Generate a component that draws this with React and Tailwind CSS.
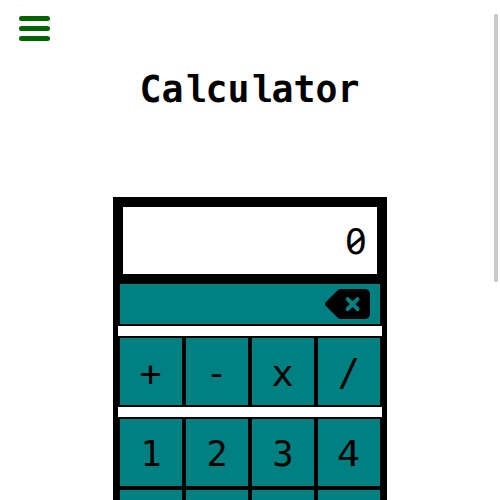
function Key({ children, glyph = "translate-y-[2px]" }) {
  return (
    <button className="flex h-[71px] w-[66px] items-center justify-center border-2 border-black bg-[#008080] text-[35px] leading-none text-black">
      <span className={glyph}>{children}</span>
    </button>
  );
}

const slab = "font-['Liberation_Mono',monospace] text-[38px] tracking-[-0.8px]";

export default function App() {
  return (
    <div className="flex h-[500px] overflow-hidden bg-white font-['DejaVu_Sans_Mono',monospace] text-black">
      <main className="ml-[6px] flex flex-1 flex-col items-center">
        <button aria-label="Menu" className="mt-4 ml-[13px] flex h-[25px] shrink-0 flex-col justify-between self-start">
          <span className="h-[5px] w-[31px] rounded-full bg-[#006400]" />
          <span className="h-[5px] w-[31px] rounded-full bg-[#006400]" />
          <span className="h-[5px] w-[31px] rounded-full bg-[#006400]" />
        </button>
        <h1 className="mt-[27px] -ml-px h-11 shrink-0 text-[36.5px] leading-[44px] font-bold">
          Ca<span className={slab}>l</span>cu<span className={slab}>l</span>ator
        </h1>
        <section className="mt-[85px] w-[274px] shrink-0 border-5 border-black bg-white">
          <div className="flex h-20 items-center justify-end border-5 border-b-8 border-black pr-[10px] font-['DejaVu_Sans',sans-serif] text-[35px] leading-none">
            <span className="relative translate-y-[2px]">
              0
              <span className="absolute top-[16px] left-[3px] h-[3px] w-[16px] -rotate-40 bg-black" />
            </span>
          </div>
          <div className="flex h-11 items-center justify-end border-2 border-black bg-[#008080] pr-[10px]">
            <svg width="45" height="30" viewBox="0 0 576 384" preserveAspectRatio="none" aria-label="Backspace">
              <path d="M576 64v256c0 35-29 64-64 64H205c-17 0-33-7-45-19L9 215c-12-12-12-33 0-46L160 19C172 7 188 0 205 0h307c35 0 64 29 64 64Z" />
              <path d="m290 130 126 126m0-126L290 256" fill="none" stroke="#008080" strokeWidth="52" strokeLinecap="round" />
            </svg>
          </div>
          <div className="h-[10px]" />
          <div className="grid grid-cols-4">
            <Key glyph="translate-y-[3px] scale-x-105">+</Key>
            <Key glyph="translate-y-[2px] scale-x-105">-</Key>
            <Key glyph="translate-y-[3px] scale-x-105">x</Key>
            <Key glyph="translate-y-[1px] text-[37px]">/</Key>
          </div>
          <div className="h-[10px]" />
          <div className="grid grid-cols-4">
            <Key>1</Key>
            <Key>2</Key>
            <Key>3</Key>
            <Key glyph="translate-y-[2px] scale-x-110">4</Key>
          </div>
          <div className="grid grid-cols-4">
            <Key />
            <Key />
            <Key />
            <Key />
          </div>
        </section>
      </main>
      <div className="mt-[14px] mr-[2px] h-[268px] w-1 rounded-[1px] bg-[#cbcbcb]" />
    </div>
  );
}
